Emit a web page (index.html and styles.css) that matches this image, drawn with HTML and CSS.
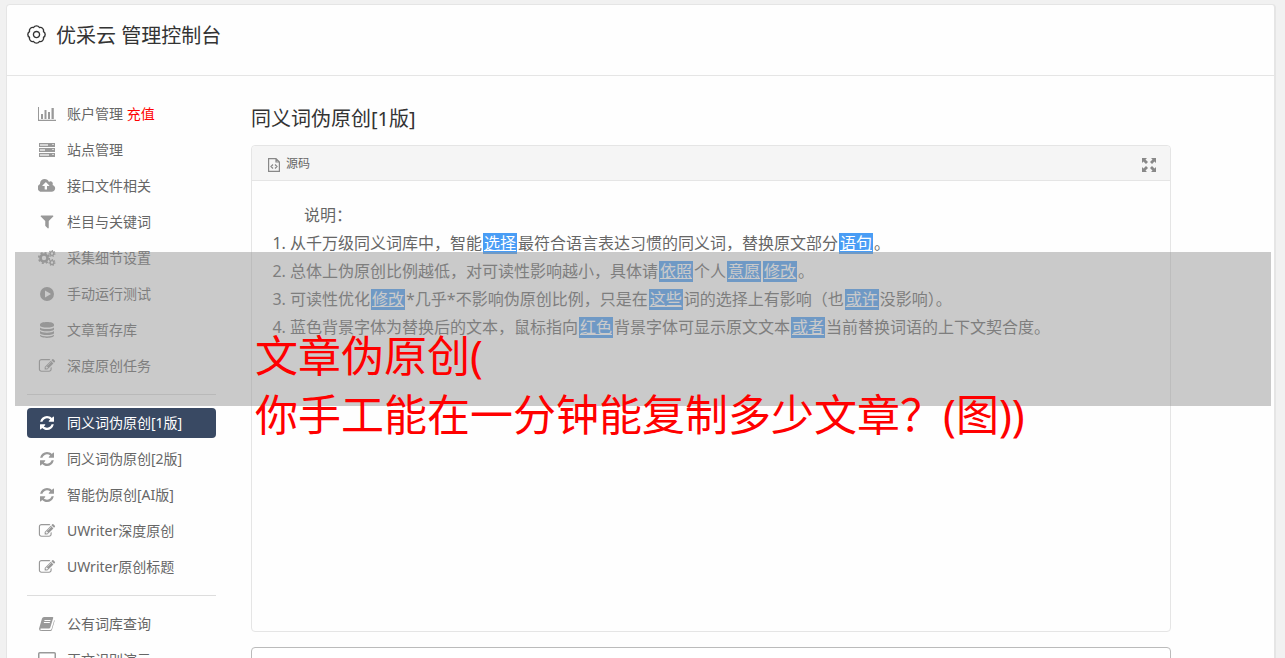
FILE: index.html
```html
<!DOCTYPE html>
<html lang="zh-CN">
<head>
<meta charset="utf-8">
<title>优采云 管理控制台</title>
<link rel="stylesheet" href="styles.css">
</head>
<body>
<svg class="defs" aria-hidden="true">
  <symbol id="i-bars" viewBox="0 0 18 14"><path d="M0 0h1v12.700h17V14H0zM3 7h2v5H3zM6.500 3h2v9h-2zM10 5h2v7h-2zM13.500 1h2.300v11h-2.300z"/></symbol>
  <symbol id="i-server" viewBox="0 0 16 14"><path d="M0 0h16v4H0zM0 5h16v4H0zM0 10h16v4H0z"/><path fill="#fff" fill-opacity=".6" d="M1 1h8v2H1zM13 1h2v1h-2zM1 6h5v2H1zM13 6h2v1h-2zM1 11h9v2H1zM13 11h2v1h-2z"/></symbol>
  <symbol id="i-cloud" viewBox="0 128 1920 1536"><path fill-rule="evenodd" d="M1216 864q0-14-9-23l-352-352q-9-9-23-9t-23 9l-351 351q-10 12-10 24 0 14 9 23t23 9h224v352q0 13 9.500 22.500t22.500 9.500h192q13 0 22.500-9.500t9.500-22.500v-352h224q13 0 22.500-9.500t9.500-22.500zm640 288q0 159-112.500 271.500t-271.500 112.500h-1088q-185 0-316.500-131.500t-131.500-316.500q0-130 70-240t188-165q-2-30-2-43 0-212 150-362t362-150q156 0 285.500 87t188.500 231q71-62 166-62 106 0 181 75t75 181q0 76-41 138 130 31 213.500 135.500t83.500 238.500z"/></symbol>
  <symbol id="i-filter" viewBox="128 192 1536 1536"><path d="M1595 295q17 41-14 70l-493 493v742q0 42-39 59-13 5-25 5-27 0-45-19l-256-256q-19-19-19-45v-486l-493-493q-31-29-14-70 17-39 59-39h1280q42 0 59 39z"/></symbol>
  <symbol id="i-cogs" viewBox="0 0 18 16"><g fill="none" stroke="currentColor"><circle cx="6" cy="8" r="3.500" stroke-width="2.600"/><circle cx="6" cy="8" r="5.200" stroke-width="1.800" stroke-dasharray="2.040 2.040"/><circle cx="14" cy="3.500" r="1.900" stroke-width="1.400"/><circle cx="14" cy="3.500" r="2.900" stroke-width="1.200" stroke-dasharray="1.300 1.300"/><circle cx="14" cy="12.500" r="1.900" stroke-width="1.400"/><circle cx="14" cy="12.500" r="2.900" stroke-width="1.200" stroke-dasharray="1.300 1.300"/></g></symbol>
  <symbol id="i-play" viewBox="0 0 14 14"><path fill-rule="evenodd" d="M7 0a7 7 0 1 1 0 14A7 7 0 0 1 7 0zM5 3.500v7L11 7z"/></symbol>
  <symbol id="i-db" viewBox="0 0 14 16"><path d="M0 2.500C0-.8 14-.8 14 2.500v1C14 6.300 0 6.300 0 3.500zM0 5.400c2 2.200 12 2.200 14 0v1.800c0 2.800-14 2.800-14 0zM0 9.100c2 2.200 12 2.200 14 0v1.800c0 2.800-14 2.800-14 0zM0 12.800c2 2.200 12 2.200 14 0v.8c0 3.200-14 3.200-14 0z"/></symbol>
  <symbol id="i-edit" viewBox="0 128 1792 1536"><path fill-rule="evenodd" d="M888 1184l116-116-152-152-116 116v56h96v96h56zm440-720q-16-16-33 1l-350 350q-17 17-1 33t33-1l350-350q17-17 1-33zm80 594v190q0 119-84.500 203.500t-203.500 84.500h-832q-119 0-203.500-84.500t-84.500-203.500v-832q0-119 84.500-203.500t203.500-84.500h832q63 0 117 25 15 7 18 23 3 17-9 29l-49 49q-14 14-32 8-23-6-45-6h-832q-66 0-113 47t-47 113v832q0 66 47 113t113 47h832q66 0 113-47t47-113v-126q0-13 9-22l64-64q15-15 35-7t20 29zm-96-738l288 288-672 672h-288v-288zm444 132l-92 92-288-288 92-92q28-28 68-28t68 28l152 152q28 28 28 68t-28 68z"/></symbol>
  <symbol id="i-refresh" viewBox="0 0 1536 1536"><path d="M1511 928q0 5-1 7-64 268-268 434.500t-478 166.500q-146 0-282.500-55t-243.500-157l-129 129q-19 19-45 19t-45-19-19-45v-448q0-26 19-45t45-19h448q26 0 45 19t19 45-19 45l-137 137q71 66 161 102t187 36q134 0 250-65t186-179q11-17 53-117 8-23 30-23h192q13 0 22.500 9.500t9.500 22.500zm25-800v448q0 26-19 45t-45 19h-448q-26 0-45-19t-19-45 19-45l138-138q-148-137-349-137-134 0-250 65t-186 179q-11 17-53 117-8 23-30 23h-199q-13 0-22.500-9.500t-9.500-22.500v-7q65-268 270-434.500t480-166.500q146 0 284 55.500t245 156.500l130-129q19-19 45-19t45 19 19 45z"/></symbol>
  <symbol id="i-book" viewBox="0 0 16 14"><path fill-rule="evenodd" d="M5 0h8.500q1 0 .7 1L11.300 10.500q-.3 1-1.300 1H2q-1 0-.6.900t1.300.700h8.600q.9 0 1.200-.8L15.300 3q.5.400.3 1.100l-2.700 8.800q-.4 1.100-1.500 1.100H2.200Q0 14 0 11.800L3 1.500Q3.500 0 5 0zM5.600 3l-.3 1h6l.3-1zM5 5l-.3 1h6L11 5z"/></symbol>
  <symbol id="i-screen" viewBox="0 0 18 16"><path fill="none" stroke="currentColor" stroke-width="1.500" d="M1.750.75h14.500q1 0 1 1v9.500q0 1-1 1H1.750q-1 0-1-1v-9.500q0-1 1-1zM5 15.200h8M9 12v3"/></symbol>
</svg>
<div class="page">
  <div class="card">
    <header class="top">
      <svg class="top-icon" viewBox="-9 -9 18 18" fill="none" stroke="currentColor" stroke-width="1.300" stroke-linejoin="round"><path d="M6.650 2.760A3.200 3.200 0 0 1 2.760 6.650A3.200 3.200 0 0 1-2.760 6.650A3.200 3.200 0 0 1-6.650 2.760A3.200 3.200 0 0 1-6.650-2.760A3.200 3.200 0 0 1-2.760-6.650A3.200 3.200 0 0 1 2.760-6.650A3.200 3.200 0 0 1 6.650-2.760A3.200 3.200 0 0 1 6.650 2.760z"/><circle r="2.900"/></svg>
      <h1 class="top-title">优采云 管理控制台</h1>
    </header>
    <div class="columns">
      <nav class="side">
        <a class="item" href="#"><svg class="ico"><use href="#i-bars"/></svg><span>账户管理 <span class="pay">充值</span></span></a>
        <a class="item" href="#"><svg class="ico"><use href="#i-server"/></svg>站点管理</a>
        <a class="item" href="#"><svg class="ico"><use href="#i-cloud"/></svg>接口文件相关</a>
        <a class="item" href="#"><svg class="ico"><use href="#i-filter"/></svg>栏目与关键词</a>
        <a class="item" href="#"><svg class="ico ico-tall"><use href="#i-cogs"/></svg>采集细节设置</a>
        <a class="item" href="#"><svg class="ico"><use href="#i-play"/></svg>手动运行测试</a>
        <a class="item" href="#"><svg class="ico ico-tall"><use href="#i-db"/></svg>文章暂存库</a>
        <a class="item" href="#"><svg class="ico"><use href="#i-edit"/></svg>深度原创任务</a>
        <hr class="rule">
        <a class="item active" href="#"><svg class="ico"><use href="#i-refresh"/></svg>同义词伪原创[1版]</a>
        <a class="item" href="#"><svg class="ico"><use href="#i-refresh"/></svg>同义词伪原创[2版]</a>
        <a class="item" href="#"><svg class="ico"><use href="#i-refresh"/></svg>智能伪原创[AI版]</a>
        <a class="item" href="#"><svg class="ico"><use href="#i-edit"/></svg>UWriter深度原创</a>
        <a class="item" href="#"><svg class="ico"><use href="#i-edit"/></svg>UWriter原创标题</a>
        <hr class="rule">
        <a class="item" href="#"><svg class="ico"><use href="#i-book"/></svg>公有词库查询</a>
        <a class="item" href="#"><svg class="ico ico-tall"><use href="#i-screen"/></svg>正文识别演示</a>
      </nav>
      <main class="main">
        <h2 class="title">同义词伪原创[1版]</h2>
        <section class="panel">
          <div class="toolbar">
            <button class="tool" type="button"><svg class="tool-icon" viewBox="0 0 12 14" fill="none" stroke="currentColor" stroke-width="1.200"><path d="M.6.6h7.400l3.400 3.400v9.400H.6zM8 .6V4h3.400M5 6.500l-2 2 2 2M7 6.500l2 2-2 2"/></svg>源码</button>
            <button class="tool" type="button" aria-label="全屏"><svg class="full-icon" viewBox="0 0 14 14" fill="currentColor"><path d="M0 0h5L3.500 1.500 6 4 4 6 1.500 3.500 0 5zM14 0v5l-1.500-1.500L10 6 8 4l2.500-2.500L9 0zM0 14V9l1.500 1.500L4 8l2 2-2.500 2.500L5 14zM14 14H9l1.500-1.500L8 10l2-2 2.500 2.500L14 9z"/></svg></button>
          </div>
          <div class="article">
            <p class="intro">说明：</p>
            <ol class="notes">
              <li>从千万级同义词库中，智能<u class="hit">选择</u>最符合语言表达习惯的同义词，替换原文部分<u class="hit">语句</u>。</li>
              <li>总体上伪原创比例越低，对可读性影响越小，具体请<u class="hit">依照</u>个人<u class="hit">意愿</u><u class="hit">修改</u>。</li>
              <li>可读性优化<u class="hit">修改</u>*几乎*不影响伪原创比例，只是在<u class="hit">这些</u>词的选择上有影响（也<u class="hit">或许</u>没影响）。</li>
              <li>蓝色背景字体为替换后的文本，鼠标指向<u class="hit">红色</u>背景字体可显示原文文本<u class="hit">或者</u>当前替换词语的上下文契合度。</li>
            </ol>
          </div>
        </section>
        <textarea class="input" aria-label="原文"></textarea>
      </main>
    </div>
  </div>
  <div class="banner"><p class="banner-text">文章伪原创(<br>你手工能在一分钟能复制多少文章？(图))</p></div>
</div>
</body>
</html>
```
FILE: styles.css
```css
* { box-sizing: border-box; }
body {
  margin: 0;
  background: #f1f1f1;
  color: #666;
  font: 14px/20px "Noto Sans", "Noto Sans CJK SC", sans-serif;
}
h1, h2, p { margin: 0; font-weight: 400; }
.defs { display: none; }
.page {
  position: relative;
  height: 100vh;
  overflow: hidden;
  padding: 4px 9px 0 6px;
}
.card {
  min-height: 100%;
  background: #fefefe;
  border: 1px solid #e5e5e5;
  border-right-width: 2px;
  border-radius: 4px 4px 0 0;
}
.top {
  display: flex;
  align-items: center;
  gap: 10px;
  height: 71px;
  padding: 0 20px 8px;
  border-bottom: 1px solid #e5e5e5;
  color: #333;
}
.top-icon { width: 19px; height: 19px; margin-bottom: 3px; }
.top-title { font-size: 20px; line-height: 28px; }
.columns {
  display: flex;
  gap: 35px;
  padding: 23px 103px 0 20px;
}
.side {
  display: flex;
  flex: none;
  flex-direction: column;
  gap: 6px;
  width: 189px;
}
.item {
  display: flex;
  align-items: center;
  gap: 11px;
  height: 30px;
  padding: 0 11px;
  border-radius: 4px;
  color: #666;
  text-decoration: none;
  white-space: nowrap;
}
.ico {
  flex: none;
  width: 18px;
  height: 14px;
  color: #999;
  fill: #999;
}
.ico-tall { height: 16px; }
.pay { color: #f00; }
.active { background: #394963; color: #fff; }
.active .ico { fill: #fff; }
.rule {
  width: 100%;
  margin: 7px 0;
  border: 0;
  border-top: 1px solid #ddd;
}
.main { flex: 1; min-width: 0; }
.title {
  margin: 5px 0 12px;
  color: #333;
  font-size: 20px;
  line-height: 29px;
}
.panel {
  min-height: 487px;
  margin-bottom: 15px;
  border: 1px solid #e5e5e5;
  border-radius: 4px;
}
.toolbar {
  display: flex;
  align-items: center;
  justify-content: space-between;
  height: 35px;
  padding: 2px 14px 0 16px;
  background: #f5f5f5;
  border-bottom: 1px solid #e5e5e5;
  border-radius: 4px 4px 0 0;
}
.tool {
  display: flex;
  align-items: center;
  gap: 6px;
  padding: 0;
  border: 0;
  background: none;
  color: #666;
  font: inherit;
  font-size: 12px;
}
.tool-icon { width: 12px; height: 14px; margin-top: 2px; color: #888; }
.full-icon { width: 14px; height: 14px; margin-top: 2px; color: #888; }
.article {
  padding: 20px;
  font-size: 16px;
  line-height: 28px;
}
.intro { text-indent: 2em; }
.notes { margin: 0; padding-left: 18px; }
.hit {
  display: inline-block;
  margin: 0 1px;
  padding: 0 1px;
  background: #499df5;
  color: #fff;
  line-height: 21px;
  text-decoration: underline;
}
.input {
  display: block;
  width: 100%;
  height: 120px;
  border: 1px solid #bbb;
  border-radius: 4px;
  background: #fff;
  resize: none;
}
.banner {
  position: absolute;
  top: 252px;
  right: 14px;
  left: 15px;
  height: 154px;
  padding: 74px 0 0 240px;
  background: rgba(149, 149, 149, .5);
  pointer-events: none;
}
.banner-text {
  color: #f00;
  font-size: 43px;
  line-height: 59px;
  white-space: nowrap;
}
```
